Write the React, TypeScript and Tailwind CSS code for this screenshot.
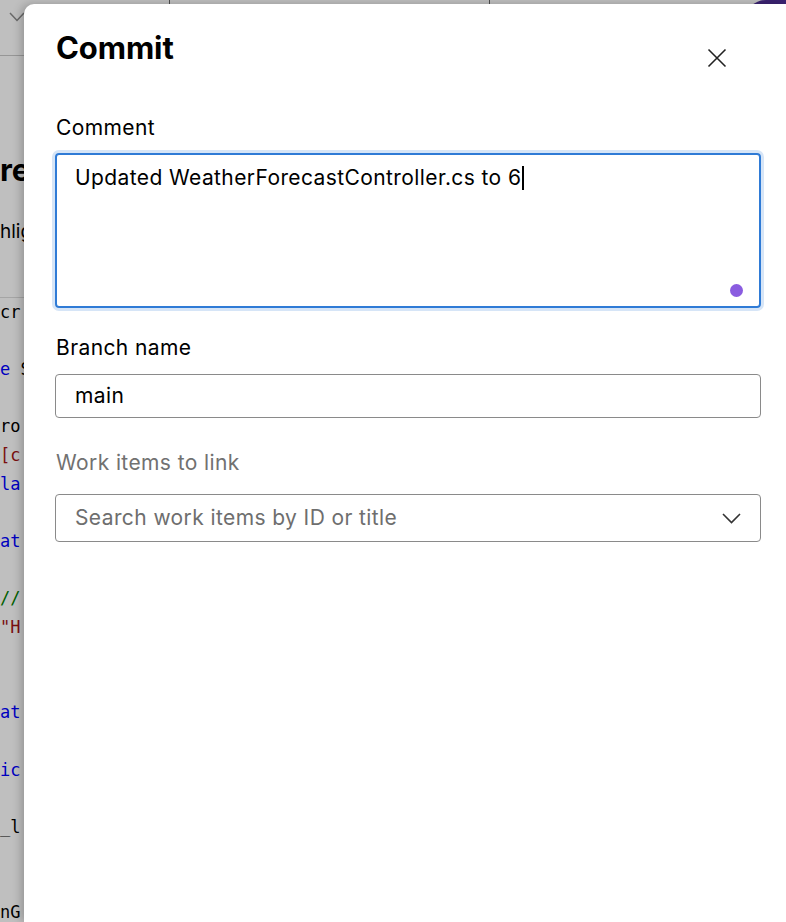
import React from 'react';

type Tok = { t: string; c: string };

const codeLines: Record<number, Tok[]> = {
  0: [{ t: 'cr', c: 'text-black' }],
  2: [{ t: 'e', c: 'text-[#0000ff]' }, { t: ' S', c: 'text-black' }],
  4: [{ t: 'ro', c: 'text-black' }],
  5: [{ t: '[c', c: 'text-[#a31515]' }],
  6: [{ t: 'la', c: 'text-[#0000ff]' }],
  8: [{ t: 'at', c: 'text-[#0000ff]' }],
  10: [{ t: '//', c: 'text-[#008000]' }],
  11: [{ t: '"H', c: 'text-[#a31515]' }],
  14: [{ t: 'at', c: 'text-[#0000ff]' }],
  16: [{ t: 'ic', c: 'text-[#0000ff]' }],
  18: [{ t: '_l', c: 'text-black' }],
  21: [{ t: 'nG', c: 'text-black' }],
};

const BackgroundPage: React.FC = () => {
  return (
    <div className="flex flex-col h-full bg-white">
      <div className="shrink-0 flex h-[56px] border-b border-[#c8c8c8]">
        <div className="w-[170px] border-r border-[#6a6a6a] flex items-start pt-[12px] pl-[9px]">
          <svg width="16" height="10" viewBox="0 0 16 10" fill="none">
            <path d="M1 1l7 7.5L15 1" stroke="#8c8c8c" strokeWidth="1.5" />
          </svg>
        </div>
        <div className="w-[320px] border-r border-[#6a6a6a]" />
        <div className="flex-1" />
        <div className="w-[42px] h-[40px] rounded-tl-[22px] bg-[#4f2f98]" />
      </div>
      <div className="shrink-0 mt-[96px] text-[31px] leading-[36px] font-bold text-black">re</div>
      <div className="shrink-0 mt-[30px] text-[19px] leading-[28px] text-black">hlig</div>
      <div className="shrink-0 mt-[51px] border-t border-[#dcdcdc] font-['DejaVu_Sans_Mono',monospace] text-[17px] leading-[28.6px]">
        {Array.from({ length: 23 }).map((_, i) => (
          <div key={i} className="h-[28.6px] whitespace-pre">
            {(codeLines[i] || []).map((tok, j) => (
              <span key={j} className={tok.c}>
                {tok.t}
              </span>
            ))}
          </div>
        ))}
      </div>
    </div>
  );
};

const CommitPanel: React.FC = () => {
  return (
    <div className="absolute left-[24px] top-[4px] right-0 bottom-0 bg-white rounded-tl-[10px] shadow-[-3px_0_10px_rgba(0,0,0,0.22)] pl-[31px] pr-[25px] pt-[26px] text-[#1b1b1b]">
      <div className="flex items-start justify-between">
        <h1 className="text-[31px] leading-[36px] font-bold text-black ml-[1px] tracking-[-0.1px]">Commit</h1>
        <button className="mt-[12px] mr-[28px] w-[32px] h-[32px] flex items-center justify-center">
          <svg width="20" height="20" viewBox="0 0 20 20" fill="none">
            <path d="M1.5 1.5l17 17M18.5 1.5l-17 17" stroke="#222" strokeWidth="1.6" />
          </svg>
        </button>
      </div>

      <label className="block mt-[40px] ml-[1px] text-[21px] leading-[28px] tracking-[0.4px] text-black">Comment</label>
      <div className="relative mt-[11px] h-[155px] rounded-[4px] border-2 border-[#2f7bd6] ring-[3px] ring-[#d6e5f7] pl-[18px] pt-[9px] text-[21px] leading-[28px] tracking-[0.4px] text-black">
        <span>Updated WeatherForecastController.cs to 6</span>
        <span className="inline-block align-middle w-[1.5px] h-[24px] bg-black ml-[1px] -mt-[3px]" />
        <span className="absolute right-[16px] bottom-[9px] w-[13px] h-[13px] rounded-full bg-[#8a5ce0]" />
      </div>

      <label className="block mt-[26px] ml-[1px] text-[21px] leading-[28px] tracking-[0.4px] text-black">Branch name</label>
      <div className="mt-[12px] h-[44px] rounded-[4px] border border-[#8a8a8a] flex items-center pl-[19px] text-[21px] tracking-[0.4px] text-black">
        main
      </div>

      <label className="block mt-[31px] ml-[1px] text-[21px] leading-[28px] tracking-[0.4px] text-[#717171]">Work items to link</label>
      <div className="mt-[17px] h-[48px] rounded-[4px] border border-[#8a8a8a] flex items-center justify-between pl-[19px] pr-[19px] text-[21px] tracking-[0.4px] text-[#6e6e6e]">
        <span>Search work items by ID or title</span>
        <svg width="19" height="11" viewBox="0 0 19 11" fill="none">
          <path d="M1 1l8.5 8.5L18 1" stroke="#333" strokeWidth="1.6" />
        </svg>
      </div>
    </div>
  );
};

const App: React.FC = () => {
  return (
    <div className="relative w-[786px] h-[922px] overflow-hidden font-['Inter','Liberation_Sans',sans-serif]">
      <BackgroundPage />
      <div className="absolute inset-0 bg-black/25" />
      <CommitPanel />
    </div>
  );
};

export default App;
